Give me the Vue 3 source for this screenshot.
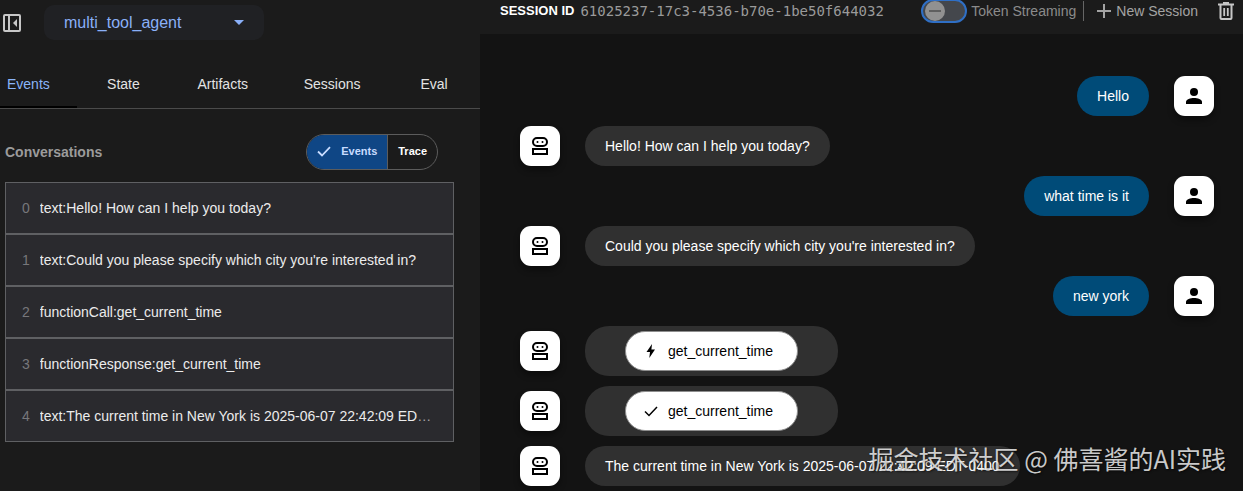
<template>
  <div class="agent-page">
    <aside class="side-panel">
      <div class="app-bar">
        <button class="icon-btn" aria-label="close panel">
          <svg width="18" height="18" viewBox="0 0 18 18" fill="none" stroke="currentColor" stroke-width="2">
            <rect x="1" y="1" width="16" height="16" rx="1" />
            <path d="M6 1v16" />
            <path d="M14 5v8L10 9z" fill="currentColor" stroke="none" />
          </svg>
        </button>
        <div class="app-select">
          <select v-model="selectedApp" aria-label="agent">
            <option value="multi_tool_agent">multi_tool_agent</option>
          </select>
          <svg class="select-arrow" width="10" height="5" viewBox="0 0 10 5">
            <path d="M0 0h10L5 5z" fill="currentColor" />
          </svg>
        </div>
      </div>

      <nav class="tabs">
        <button
          v-for="tab in tabs"
          :key="tab"
          class="tab"
          :class="{ active: tab === activeTab }"
          @click="activeTab = tab"
        >{{ tab }}</button>
      </nav>

      <div class="events-section">
        <div class="events-header">
          <h3>Conversations</h3>
          <div class="view-toggle">
            <button
              v-for="view in views"
              :key="view"
              :class="{ selected: view === activeView }"
              @click="activeView = view"
            >
              <svg v-if="view === activeView" width="14" height="11" viewBox="0 0 14 11" fill="none" stroke="currentColor" stroke-width="1.8">
                <path d="M1 5.5l4 4L13 1.2" />
              </svg>
              {{ view }}
            </button>
          </div>
        </div>

        <ul class="event-list">
          <li v-for="(event, index) in events" :key="index">
            <button class="event-row">
              <span class="event-index">{{ index }}</span>
              <span class="event-title"><span>{{ event }}</span></span>
            </button>
          </li>
        </ul>
      </div>
    </aside>

    <main class="chat">
      <header class="toolbar">
        <span class="session-label">Session ID</span>
        <span class="session-id">{{ sessionId }}</span>
        <div class="toolbar-actions">
          <label class="streaming">
            <input v-model="streaming" type="checkbox" role="switch" />
            Token Streaming
          </label>
          <span class="divider"></span>
          <button class="new-session">
            <svg width="14" height="14" viewBox="0 0 14 14" stroke="currentColor" stroke-width="2">
              <path d="M7 0v14M0 7h14" />
            </svg>
            New Session
          </button>
          <button class="icon-btn" aria-label="delete session">
            <svg width="16" height="18" viewBox="0 0 16 18" fill="none" stroke="currentColor" stroke-width="2">
              <path d="M0 2.5h16" />
              <path d="M5 1h6" />
              <path d="M2.5 3v13q0 1 1 1h9q1 0 1-1V3" />
              <path d="M6.2 6v8M9.8 6v8" stroke-width="1.8" />
            </svg>
          </button>
        </div>
      </header>

      <div class="messages">
        <div v-for="(message, i) in messages" :key="i" class="message" :class="message.role">
          <span v-if="message.role === 'bot'" class="avatar">
            <svg width="16" height="18" viewBox="0 0 16 18" fill="none" stroke="currentColor" stroke-width="2">
              <rect x="1" y="1" width="14" height="8" rx="4" />
              <rect x="1" y="12" width="14" height="5" />
              <circle cx="5.5" cy="5" r="1" fill="currentColor" stroke="none" />
              <circle cx="10.5" cy="5" r="1" fill="currentColor" stroke="none" />
            </svg>
          </span>
          <div v-if="message.call" class="bubble call">
            <button class="call-btn">
              <svg v-if="message.call === 'request'" width="16" height="14" viewBox="0 0 16 14" fill="currentColor">
                <path d="M9 0L3.5 8H7l-.7 6L12 5.5H8.4z" />
              </svg>
              <svg v-else width="16" height="14" viewBox="0 0 16 14" fill="none" stroke="currentColor" stroke-width="1.5">
                <path d="M2 7.5l4 4L14 3" />
              </svg>
              {{ message.text }}
            </button>
          </div>
          <div v-else class="bubble">{{ message.text }}</div>
          <span v-if="message.role === 'user'" class="avatar">
            <svg width="16" height="16" viewBox="0 0 16 16" fill="currentColor">
              <circle cx="8" cy="4" r="4" />
              <path d="M0 16v-2C0 11.2 4.5 10 8 10s8 1.2 8 4v2z" />
            </svg>
          </span>
        </div>
      </div>
    </main>

    <div class="watermark">掘金技术社区 @ 佛喜酱的AI实践</div>
  </div>
</template>

<script setup>
import { ref } from 'vue';

const selectedApp = ref('multi_tool_agent');

const tabs = ['Events', 'State', 'Artifacts', 'Sessions', 'Eval'];
const activeTab = ref('Events');

const views = ['Events', 'Trace'];
const activeView = ref('Events');

const sessionId = '61025237-17c3-4536-b70e-1be50f644032';
const streaming = ref(false);

const events = [
  'text:Hello! How can I help you today?',
  "text:Could you please specify which city you're interested in?",
  'functionCall:get_current_time',
  'functionResponse:get_current_time',
  'text:The current time in New York is 2025-06-07 22:42:09 EDT-0400.',
];

const messages = [
  { role: 'user', text: 'Hello' },
  { role: 'bot', text: 'Hello! How can I help you today?' },
  { role: 'user', text: 'what time is it' },
  { role: 'bot', text: "Could you please specify which city you're interested in?" },
  { role: 'user', text: 'new york' },
  { role: 'bot', text: 'get_current_time', call: 'request' },
  { role: 'bot', text: 'get_current_time', call: 'response' },
  { role: 'bot', text: 'The current time in New York is 2025-06-07 22:42:09 EDT-0400' },
];
</script>

<style>
body {
  margin: 0;
  background: #131313;
}
</style>

<style scoped>
.agent-page {
  position: relative;
  display: grid;
  grid-template-columns: 480px 1fr;
  min-height: 100vh;
  color: #fff;
  font-family: "Liberation Sans", Arial, sans-serif;
  font-size: 14px;
  line-height: 20px;
}

button,
select {
  margin: 0;
  padding: 0;
  border: none;
  background: none;
  color: inherit;
  font: inherit;
  cursor: pointer;
}

svg {
  display: block;
  flex: none;
}

.icon-btn {
  color: #c7c7c7;
}

/* Side panel */
.side-panel {
  min-width: 0;
  background: #1b1b1b;
}

.app-bar {
  display: flex;
  align-items: center;
  gap: 23px;
  padding: 5px 3px 0;
}

.app-select {
  display: grid;
  align-items: center;
  width: 220px;
  border-radius: 10px;
  background: #202124;
  color: #8ab0f8;
}

.app-select select,
.select-arrow {
  grid-area: 1 / 1;
}

.app-select select {
  appearance: none;
  height: 35px;
  padding: 0 40px 0 20px;
  font-size: 16px;
}

.select-arrow {
  justify-self: end;
  margin-right: 20px;
  pointer-events: none;
}

.tabs {
  display: flex;
  margin-top: 20px;
  border-bottom: 1px solid #4b4b4b;
}

.tab {
  min-width: 92px;
  height: 48px;
  padding: 2px 28px 0;
  border-bottom: 2px solid transparent;
  color: #e3e3e3;
}

.tab:first-child {
  min-width: 0;
  padding-left: 7px;
}

.tab.active {
  border-bottom-color: #000;
  color: #8ab4f8;
}

.events-section {
  padding: 25px 26px 0 5px;
}

.events-header {
  display: flex;
  align-items: center;
  justify-content: space-between;
  padding-right: 16px;
}

.events-header h3 {
  margin: 0;
  color: #9b9b9b;
  font-size: 14px;
}

.view-toggle {
  display: flex;
  overflow: hidden;
  border: 1px solid #5c5c5c;
  border-radius: 18px;
}

.view-toggle button {
  display: flex;
  align-items: center;
  gap: 10px;
  height: 34px;
  padding: 0 10px 2px;
  font-size: 11px;
  font-weight: bold;
}

.view-toggle button + button {
  border-left: 1px solid #5c5c5c;
}

.view-toggle .selected {
  background: #0f4685;
  color: #c8dcff;
}

.event-list {
  margin: 12px 0 0;
  padding: 0;
  list-style: none;
}

.event-row {
  display: flex;
  align-items: center;
  gap: 10px;
  width: 100%;
  height: 52px;
  padding: 0 18px 0 16px;
  border: 1px solid #5f6063;
  background: #2a2a2e;
  text-align: left;
}

.event-index {
  color: #77777b;
}

.event-title {
  flex: 1;
  min-width: 0;
  overflow: hidden;
  color: #a5a5a8;
  text-overflow: ellipsis;
  white-space: nowrap;
}

.event-title span {
  color: #ececec;
}

/* Chat */
.chat {
  min-width: 0;
  background: #131313;
}

.toolbar {
  display: flex;
  align-items: center;
  height: 22px;
  padding: 0 9px 12px 20px;
  background: #1b1b1b;
  white-space: nowrap;
}

.session-label {
  font-size: 13px;
  font-weight: bold;
  text-transform: uppercase;
}

.session-id {
  margin-left: 6px;
  color: #9a9a9a;
  font-family: "DejaVu Sans Mono", monospace;
  font-size: 14px;
}

.toolbar-actions {
  display: flex;
  align-items: center;
  margin-left: auto;
  color: #a3a3a3;
}

.streaming {
  display: flex;
  align-items: center;
  gap: 4px;
  color: #8b8b8b;
}

.streaming input {
  appearance: none;
  display: flex;
  align-items: center;
  box-sizing: border-box;
  width: 46px;
  height: 24px;
  margin: 0;
  padding: 0 2px;
  border: 2px solid #2f6fc5;
  border-radius: 12px;
  background: #44474c;
}

.streaming input::before {
  content: "";
  width: 20px;
  height: 20px;
  border-radius: 50%;
  background: linear-gradient(#5f5f5f, #5f5f5f) center / 12px 2px no-repeat #919191;
}

.streaming input:checked {
  justify-content: flex-end;
}

.divider {
  width: 1px;
  height: 20px;
  margin: 0 13px 0 7px;
  background: #666;
}

.new-session {
  display: flex;
  align-items: center;
  gap: 5px;
  margin-right: 20px;
}

.messages {
  display: flex;
  flex-direction: column;
  gap: 10px;
  padding: 42px 29px 5px 40px;
}

.message {
  display: flex;
  align-items: center;
  gap: 25px;
}

.message.user {
  justify-content: flex-end;
}

.avatar {
  display: flex;
  flex: none;
  align-items: center;
  justify-content: center;
  width: 40px;
  height: 40px;
  border-radius: 11px;
  background: #fff;
  box-shadow: 0 4px 6px rgba(0, 0, 0, 0.4);
  color: #000;
}

.bubble {
  padding: 10px 20px;
  border-radius: 20px;
  background: #303030;
}

.user .bubble {
  background: #004b78;
}

.bubble.call {
  padding: 5px 40px;
  border-radius: 24px;
}

.call-btn {
  display: flex;
  align-items: center;
  gap: 9px;
  height: 40px;
  padding: 0 24px 0 17px;
  border: 1px solid #8e8e8e;
  border-radius: 20px;
  background: #fff;
  color: #000;
}

.watermark {
  position: absolute;
  right: 17px;
  bottom: 15px;
  color: rgba(255, 255, 255, 0.78);
  font-family: "Noto Sans CJK SC", sans-serif;
  font-size: 25px;
  line-height: 36px;
  text-shadow: 1px 1px 2px rgba(0, 0, 0, 0.6);
  pointer-events: none;
}
</style>
